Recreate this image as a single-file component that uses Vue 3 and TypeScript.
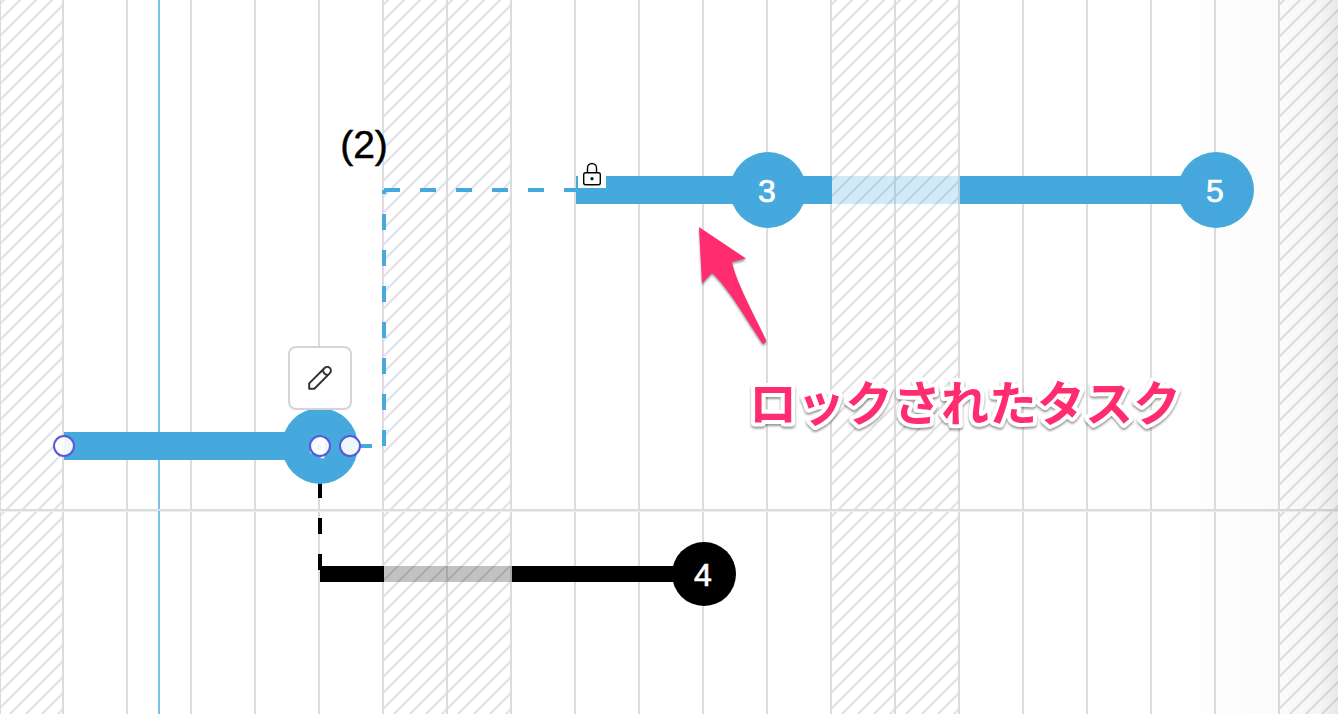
<script setup lang="ts">
interface Segment { x: number; width: number; off?: boolean }
interface Task {
  id: string
  y: number
  height: number
  tone: 'blue' | 'black'
  segments: Segment[]
  nodes: { x: number; r: number; days: number }[]
}

const DAY = 64
const dayLines: number[] = Array.from({ length: 60 }, (_, i) => (i + 1) * DAY - 2)
const weekends: number[] = Array.from({ length: 9 }, (_, i) => i * DAY * 7 - DAY)

const tasks: Task[] = [
  {
    id: 'first', y: 446, height: 28, tone: 'blue',
    segments: [{ x: 64, width: 256 }],
    nodes: [{ x: 320, r: 38, days: 4 }],
  },
  {
    id: 'locked', y: 190, height: 28, tone: 'blue',
    segments: [{ x: 576, width: 256 }, { x: 832, width: 128, off: true }, { x: 960, width: 256 }],
    nodes: [{ x: 768, r: 38, days: 3 }, { x: 1216, r: 38, days: 5 }],
  },
  {
    id: 'follow', y: 574, height: 16, tone: 'black',
    segments: [{ x: 320, width: 64 }, { x: 384, width: 128, off: true }, { x: 512, width: 192 }],
    nodes: [{ x: 704, r: 32, days: 4 }],
  },
]

const handles: number[] = [64, 320, 350]
</script>

<template>
  <main class="gantt">
    <svg class="chart" role="img" aria-label="ガントチャート">
      <defs>
        <pattern id="hatch" width="16" height="16" patternUnits="userSpaceOnUse">
          <path class="hatch-line" d="M-4 8L8 -4M-4 24L24 -4" />
        </pattern>
      </defs>

      <rect v-for="x in weekends" :key="'w' + x" :x="x" y="0" :width="DAY * 2" height="100%" fill="url(#hatch)" />
      <rect class="grid" x="0" y="0" width="1" height="100%" />
      <rect v-for="x in dayLines" :key="'d' + x" class="grid" :x="x" y="0" width="2" height="100%" />
      <rect class="grid-soft" x="0" y="511" width="100%" height="1" />
      <rect class="today" x="158" y="0" width="2" height="100%" />
      <rect class="grid" x="0" y="509" width="100%" height="2" />

      <path class="link blue" d="M320 446H384" />
      <path class="link blue" d="M384 446V190" />
      <path class="link blue" d="M384 190H576" />
      <path class="link black" d="M320 446V574" />

      <g v-for="t in tasks" :key="t.id" :class="t.tone">
        <rect
          v-for="s in t.segments" :key="s.x" :class="{ off: s.off }"
          :x="s.x" :y="t.y - t.height / 2" :width="s.width" :height="t.height"
        />
        <g v-for="n in t.nodes" :key="n.x">
          <circle :cx="n.x" :cy="t.y" :r="n.r" />
          <text class="days" :x="n.x - 1" :y="t.y + 12">{{ n.days }}</text>
        </g>
      </g>

      <text class="lag" x="364" y="158">(2)</text>

      <g class="lock">
        <rect class="lock-bg" x="578" y="160" width="28" height="28" />
        <rect x="583.7" y="172.7" width="16.6" height="12" rx="2" />
        <path d="M587.5 172.5V168a4.5 4.5 0 0 1 9 0V172.5" />
        <circle cx="592" cy="178.7" r="1.6" />
      </g>

      <circle v-for="x in handles" :key="'h' + x" class="handle" :cx="x" cy="446" r="10" />
    </svg>

    <button class="edit" type="button" aria-label="編集">
      <svg width="24" height="24" viewBox="0 0 24 24" aria-hidden="true">
        <path d="M1.2 22.8V17.4L16.6 2a3.6 3.6 0 0 1 5.3 5.1L6.4 22.8ZM14.8 3.8Q15.4 8.4 20.1 9" />
      </svg>
    </button>

    <div class="edge"></div>

    <svg class="chart notes">
      <path
        class="arrow"
        d="M699 227L746 258.5L732 262C736 282 754 314 766 340Q766 344 762.5 343.5C748 322 728 287 712 273L702 283.5Z"
      />
      <text class="note" x="749" y="421">ロックされたタスク</text>
    </svg>
  </main>
</template>

<style>
body {
  margin: 0;
  background: #fff;
}
</style>

<style scoped>
.gantt {
  position: relative;
  min-height: 100vh;
  overflow: hidden;
  font-family: "Liberation Sans", "Noto Sans CJK JP", sans-serif;
}
.chart {
  display: block;
  width: 100%;
  height: 100vh;
}
.notes {
  position: absolute;
  inset: 0;
  pointer-events: none;
}
.hatch-line {
  fill: none;
  stroke: #dfe0ea;
  stroke-width: 2;
}
.grid {
  fill: #dcdcdc;
}
.grid-soft {
  fill: #eee;
}
.today {
  fill: #78c1e8;
}
.blue {
  fill: #46a9de;
  stroke: none;
}
.black {
  fill: #000;
}
.off {
  opacity: 0.24;
}
.link {
  fill: none;
  stroke-width: 4;
  stroke-dasharray: 16 20;
}
.link.blue {
  stroke: #46a9de;
}
.link.black {
  stroke: #000;
}
.days {
  fill: #fff;
  stroke: #fff;
  stroke-width: 0.7;
  font-size: 32px;
  text-anchor: middle;
}
.lag {
  fill: #000;
  stroke: #000;
  stroke-width: 0.5;
  font-size: 39px;
  text-anchor: middle;
}
.lock {
  fill: none;
  stroke: #000;
  stroke-width: 1.4;
}
.lock-bg {
  fill: #fff;
  stroke: none;
}
.lock circle {
  fill: #000;
  stroke: none;
}
.handle {
  fill: rgba(255, 255, 255, 0.91);
  stroke: #5b57d8;
  stroke-width: 2;
}
.edge {
  position: absolute;
  top: 0;
  right: 0;
  bottom: 0;
  width: 178px;
  pointer-events: none;
  background: linear-gradient(
    to right,
    rgba(0, 0, 0, 0),
    rgba(0, 0, 0, 0.015) 66%,
    rgba(0, 0, 0, 0.04) 90%,
    rgba(0, 0, 0, 0.09)
  );
}
.arrow {
  fill: #ff2d6f;
  filter: drop-shadow(0 2px 1px rgba(0, 0, 0, 0.4));
}
.note {
  fill: #ff2d6f;
  stroke: #fff;
  stroke-width: 8;
  stroke-linejoin: round;
  paint-order: stroke;
  font-family: "Noto Sans CJK JP", sans-serif;
  font-size: 48px;
  font-weight: 700;
  filter: drop-shadow(0 2px 1px rgba(0, 0, 0, 0.4));
}
.edit {
  position: absolute;
  left: 288px;
  top: 346px;
  display: flex;
  align-items: center;
  justify-content: center;
  box-sizing: border-box;
  width: 64px;
  height: 64px;
  padding: 0;
  border: 2px solid #d5d5d5;
  border-radius: 8px;
  background: #fff;
  cursor: pointer;
}
.edit path {
  fill: none;
  stroke: #333;
  stroke-width: 2;
  stroke-linejoin: round;
}
</style>
